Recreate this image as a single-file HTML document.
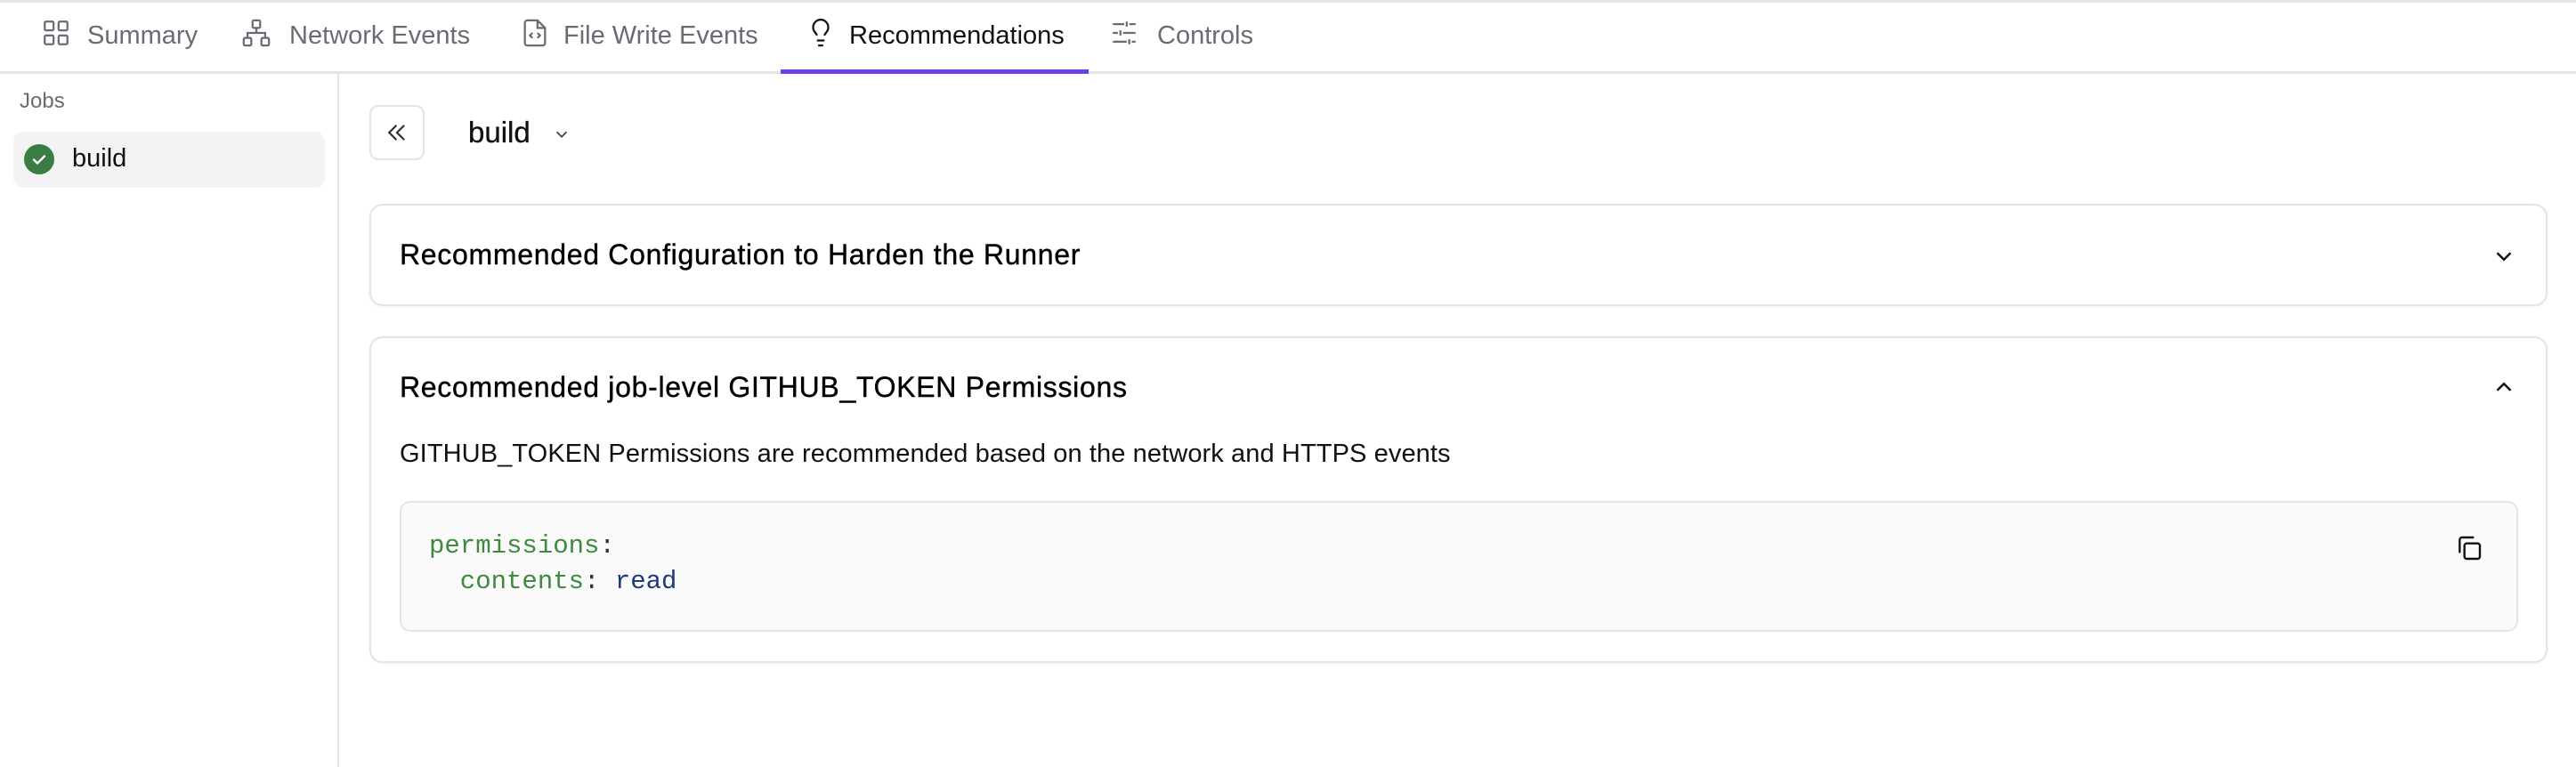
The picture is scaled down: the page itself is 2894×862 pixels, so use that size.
<!DOCTYPE html>
<html><head><meta charset="utf-8"><style>
*{box-sizing:border-box;margin:0;padding:0}
body{width:2894px;height:862px;background:#fff;font-family:"Liberation Sans",sans-serif;color:#111;position:relative;overflow:hidden}
.abs{position:absolute}
.topline{left:0;top:0;width:2894px;height:3px;background:#e4e4e7}
.tabbar{left:0;top:0;width:2894px;height:83px;border-bottom:3px solid #e4e4e7}
.tab{position:absolute;top:22px;font-size:29px;color:#6b6b73;line-height:36px;white-space:nowrap}
.tab.active{color:#111}
.ico{position:absolute;top:20px}
.under{left:877px;top:78px;width:346px;height:5px;background:#6d3fe6}
.side{left:0;top:83px;width:381px;height:779px;border-right:2px solid #e4e4e7}
.jobs{left:22px;top:100px;font-size:24px;color:#6b6b73}
.item{left:15px;top:148px;width:350px;height:63px;background:#f3f3f3;border-radius:11px}
.card{left:415px;width:2447px;border:2px solid #e4e4e7;border-radius:15px;box-shadow:0 1px 3px rgba(0,0,0,.06)}
.ct{position:absolute;left:32px;font-size:32px;letter-spacing:0.7px;color:#000;white-space:nowrap;-webkit-text-stroke:0.4px #000}
.code{left:449px;top:563px;width:2380px;height:147px;border:2px solid #e4e4e7;border-radius:12px;background:#fafafa}
.mono{font-family:"Liberation Mono","DejaVu Sans Mono",monospace;font-size:29px;position:absolute;white-space:pre}
</style></head><body>
<div class="abs tabbar"></div>
<div class="abs topline"></div>
<svg class="ico" style="left:46px" width="34" height="34" viewBox="0 0 24 24" fill="none" stroke="#6b6b73" stroke-width="1.6"><rect x="3" y="3" width="7" height="7" rx="1"/><rect x="14" y="3" width="7" height="7" rx="1"/><rect x="3" y="14" width="7" height="7" rx="1"/><rect x="14" y="14" width="7" height="7" rx="1"/></svg>
<div class="tab" style="left:98px">Summary</div>
<svg class="ico" style="left:271px" width="34" height="34" viewBox="0 0 24 24" fill="none" stroke="#6b6b73" stroke-width="1.6"><rect x="9" y="2" width="6" height="6" rx="1"/><rect x="2" y="16" width="6" height="6" rx="1"/><rect x="16" y="16" width="6" height="6" rx="1"/><path d="M5 16v-4h14v4M12 8v4"/></svg>
<div class="tab" style="left:325px">Network Events</div>
<svg class="ico" style="left:584px" width="34" height="34" viewBox="0 0 24 24" fill="none" stroke="#6b6b73" stroke-width="1.6"><path d="M14 2H6a2 2 0 0 0-2 2v16a2 2 0 0 0 2 2h12a2 2 0 0 0 2-2V8z"/><path d="M14 2v6h6M10 12l-2 2 2 2M14 12l2 2-2 2"/></svg>
<div class="tab" style="left:633px">File Write Events</div>
<svg class="ico" style="left:905px" width="34" height="34" viewBox="0 0 24 24" fill="none" stroke="#111" stroke-width="1.6"><path d="M9 18h6M10 22h4M15 14c.2-1 .7-1.7 1.5-2.5A6 6 0 1 0 7.5 11.5c.8.8 1.3 1.5 1.5 2.5"/></svg>
<div class="tab active" style="left:954px">Recommendations</div>
<div class="abs under"></div>
<svg class="ico" style="left:1246px" width="34" height="34" viewBox="0 0 24 24" fill="none" stroke="#6b6b73" stroke-width="1.6"><path d="M3 5h9M16 5h5M14 3v4M3 12h4M11 12h10M9 10v4M3 19h11M18 19h3M16 17v4"/></svg>
<div class="tab" style="left:1300px">Controls</div>

<div class="abs side"></div>
<div class="abs jobs">Jobs</div>
<div class="abs item"></div>
<svg class="abs" style="left:27px;top:162px" width="34" height="34" viewBox="0 0 34 34"><circle cx="17" cy="17" r="17" fill="#3a7d44"/><path d="M11 17.5l4 4 8-8" fill="none" stroke="#fff" stroke-width="2.4" stroke-linecap="round" stroke-linejoin="round"/></svg>
<div class="abs" style="left:81px;top:162px;font-size:29px">build</div>

<div class="abs" style="left:415px;top:118px;width:62px;height:62px;border:2px solid #e4e4e7;border-radius:10px"></div>
<svg class="abs" style="left:431px;top:134px" width="30" height="30" viewBox="0 0 24 24" fill="none" stroke="#333" stroke-width="1.8" stroke-linecap="round"><path d="M11 6l-6 6 6 6M18 6l-6 6 6 6"/></svg>
<div class="abs" style="left:526px;top:130px;font-size:33px;-webkit-text-stroke:0.3px #000">build</div>
<svg class="abs" style="left:620px;top:140px" width="22" height="22" viewBox="0 0 24 24" fill="none" stroke="#444" stroke-width="2"><path d="M6 9l6 6 6-6"/></svg>

<div class="abs card" style="top:229px;height:115px"><div class="ct" style="top:37px">Recommended Configuration to Harden the Runner</div>
<svg style="position:absolute;left:2381px;top:42px" width="30" height="30" viewBox="0 0 24 24" fill="none" stroke="#111" stroke-width="2"><path d="M6 9l6 6 6-6"/></svg></div>

<div class="abs card" style="top:378px;height:367px"><div class="ct" style="top:37px">Recommended job-level GITHUB_TOKEN Permissions</div>
<svg style="position:absolute;left:2381px;top:40px" width="30" height="30" viewBox="0 0 24 24" fill="none" stroke="#111" stroke-width="2"><path d="M6 15l6-6 6 6"/></svg>
<div style="position:absolute;left:32px;top:114px;font-size:29px;letter-spacing:0.1px;white-space:nowrap">GITHUB_TOKEN Permissions are recommended based on the network and HTTPS events</div></div>

<div class="abs code"></div>
<div class="mono" style="left:482px;top:597px;color:#3d8a3f">permissions<span style="color:#333">:</span></div>
<div class="mono" style="left:482px;top:637px;color:#3d8a3f">  contents<span style="color:#333">:</span> <span style="color:#1d3a7a">read</span></div>
<svg class="abs" style="left:2758px;top:600px" width="32" height="32" viewBox="0 0 24 24" fill="none" stroke="#111" stroke-width="1.8"><rect x="8" y="8" width="13" height="13" rx="2"/><path d="M4 16V5a2 2 0 0 1 2-2h10"/></svg>
</body></html>
